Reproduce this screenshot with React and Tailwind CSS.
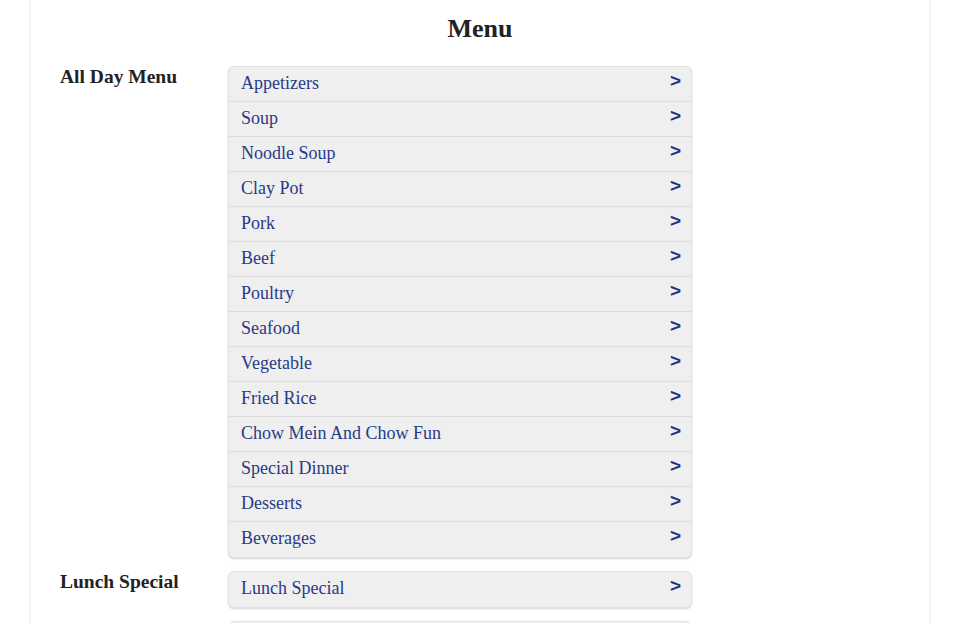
const sections = [
  {
    label: "All Day Menu",
    items: [
      "Appetizers",
      "Soup",
      "Noodle Soup",
      "Clay Pot",
      "Pork",
      "Beef",
      "Poultry",
      "Seafood",
      "Vegetable",
      "Fried Rice",
      "Chow Mein And Chow Fun",
      "Special Dinner",
      "Desserts",
      "Beverages",
    ],
  },
  { label: "Lunch Special", items: ["Lunch Special"] },
  { label: "Party Trays", items: ["Party Trays"] },
];

const MenuRow = ({ name }) => (
  <a
    href="#"
    className="flex h-[35px] items-center justify-between border-b border-[#dddddd] pb-[2px] pl-[12px] pr-[10px] last:border-b-0"
  >
    <span className="text-[18px] text-[#283a88]">{name}</span>
    <span className="mb-[6px] font-['Liberation_Sans',Arial,sans-serif] text-[19px] font-bold leading-none text-[#22327f]">
      &gt;
    </span>
  </a>
);

export default function App() {
  return (
    <div className="min-h-screen bg-white font-['Liberation_Serif','Times_New_Roman',serif]">
      <div className="mx-[29px] min-h-screen border-x-2 border-[#f3f3f3] px-[29px]">
        <h1 className="text-center text-[26px] font-bold leading-[58px] text-[#222222]">
          Menu
        </h1>

        <div className="mt-[8px] flex flex-col gap-[13px]">
          {sections.map((section) => (
            <div key={section.label} className="flex">
              <h2 className="w-[168px] shrink-0 text-[19.5px] font-bold leading-[22px] text-[#222222]">
                {section.label}
              </h2>
              <div className="w-[464px] overflow-hidden rounded-[6px] border border-[#e2e2e2] bg-[#efefef] shadow-[0_1px_2px_rgba(0,0,0,0.18)]">
                {section.items.map((item) => (
                  <MenuRow key={item} name={item} />
                ))}
              </div>
            </div>
          ))}
        </div>
      </div>
    </div>
  );
}
